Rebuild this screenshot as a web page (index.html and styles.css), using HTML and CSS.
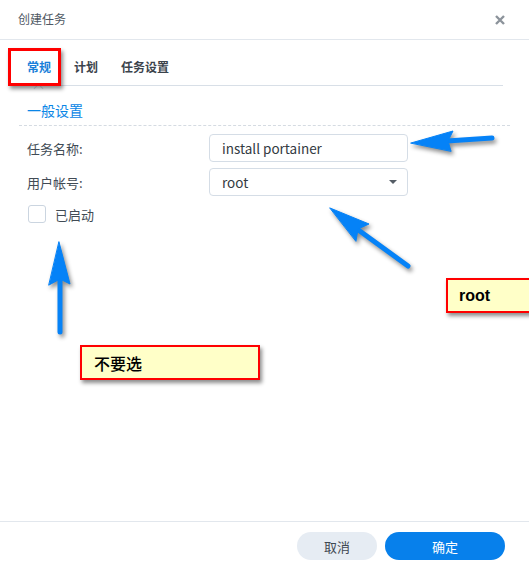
FILE: index.html
```html
<!DOCTYPE html>
<html lang="zh-CN">
<head>
<meta charset="utf-8">
<title>创建任务</title>
<link rel="stylesheet" href="styles.css">
</head>
<body>
<div class="dialog">
  <div class="header">
    <span class="title">创建任务</span>
    <svg class="close" width="10" height="10" viewBox="0 0 10 10"><path d="M1 1L9 9M9 1L1 9" stroke="#8c939b" stroke-width="2.4" stroke-linecap="butt"/></svg>
  </div>
  <div class="tabs">
    <span class="tab active">常规<i class="caret"></i></span>
    <span class="tab">计划</span>
    <span class="tab">任务设置</span>
  </div>
  <div class="content">
    <div class="section-title">一般设置</div>
    <div class="form">
      <div class="row">
        <label class="label">任务名称:</label>
        <div class="field">install portainer</div>
      </div>
      <div class="row">
        <label class="label">用户帐号:</label>
        <div class="field select">root<i class="drop"></i></div>
      </div>
      <div class="check-row">
        <span class="checkbox"></span>
        <span class="check-label">已启动</span>
      </div>
    </div>
  </div>
  <div class="footer">
    <button class="btn cancel">取消</button>
    <button class="btn ok">确定</button>
  </div>

  <div class="mark tab-mark"></div>
  <div class="note note-root">root</div>
  <div class="note note-cn">不要选</div>
  <svg class="arrows" width="529" height="569" viewBox="0 0 529 569">
    <g fill="#0582f7" stroke="#0582f7" stroke-linecap="round" stroke-linejoin="round">
      <line x1="447" y1="141" x2="492" y2="138" stroke-width="5"/>
      <polygon points="411,143 453,131 448,141 451,151" stroke-width="1"/>
      <line x1="357" y1="229" x2="408" y2="266" stroke-width="5"/>
      <polygon points="330,208 369,224 358,229 356,241" stroke-width="1"/>
      <line x1="60" y1="278" x2="60" y2="332" stroke-width="5"/>
      <polygon points="59,242 70,284 60,279 49,285" stroke-width="1"/>
    </g>
  </svg>
</div>
</body>
</html>
```
FILE: styles.css
```css
* { box-sizing: border-box; }
html, body { margin: 0; padding: 0; background: #fff; }
body {
  font-family: "Noto Sans CJK SC", "Noto Sans", sans-serif;
  color: #414b55;
}
.dialog {
  position: relative;
  width: 529px;
  height: 569px;
  display: flex;
  flex-direction: column;
  background: #fff;
}
.header {
  height: 40px;
  border-bottom: 1px solid #e2e7ed;
  display: flex;
  align-items: center;
  justify-content: space-between;
  padding: 0 24px 0 18px;
}
.title { font-size: 12px; color: #4f5863; line-height: 16px; margin-top: -1px; }
.close { display: block; margin-top: 0; }

.tabs {
  height: 46px;
  margin: 0 26px 0 19px;
  border-bottom: 1px solid #d8dfe7;
  display: flex;
  align-items: center;
  padding: 8px 0 0 8px;
  gap: 23px;
}
.tab {
  position: relative;
  font-size: 12px;
  font-weight: bold;
  color: #3b434c;
  line-height: 16px;
}
.tab.active { color: #1a7fd9; }
.caret {
  position: absolute;
  left: 8px;
  top: 26px;
  width: 7px;
  height: 7px;
  border-left: 1px solid #d8dfe7;
  border-top: 1px solid #d8dfe7;
  background: #fff;
  transform: rotate(45deg);
}

.content { padding: 0 19px; }
.section-title {
  font-size: 14px;
  color: #0a86e6;
  line-height: 20px;
  padding: 14px 0 5px 8px;
  border-bottom: 1px dashed #d5dbe2;
}
.form { padding: 8px 0 0 8px; }
.row {
  display: flex;
  align-items: center;
  height: 28px;
  margin-bottom: 6px;
}
.label {
  width: 182px;
  font-size: 13px;
  color: #414b55;
}
.field {
  position: relative;
  width: 199px;
  height: 28px;
  border: 1px solid #d5dde6;
  border-radius: 4px;
  font-size: 13.5px;
  line-height: 26px;
  padding-left: 12px;
  color: #333a42;
}
.drop {
  position: absolute;
  right: 10px;
  top: 11px;
  width: 0;
  height: 0;
  border-left: 4.5px solid transparent;
  border-right: 4.5px solid transparent;
  border-top: 4.5px solid #555d66;
}
.check-row {
  display: flex;
  align-items: center;
  margin-top: 9px;
  height: 18px;
}
.checkbox {
  width: 18px;
  height: 18px;
  border: 1px solid #cbd5e0;
  border-radius: 3px;
  margin-left: 1px;
}
.check-label {
  font-size: 13px;
  margin-left: 9px;
  color: #414b55;
}

.footer {
  margin-top: auto;
  border-top: 1px solid #e2e7ed;
  height: 48px;
  display: flex;
  justify-content: flex-end;
  align-items: flex-start;
  padding: 10px 24px 0 0;
  gap: 8px;
}
.btn {
  height: 28px;
  border: none;
  border-radius: 14px;
  font-family: "Noto Sans CJK SC", "Noto Sans", sans-serif;
  font-size: 13px;
  padding: 0;
}
.cancel { width: 80px; background: #e6ecf3; color: #3f4852; }
.ok { width: 120px; background: #0780eb; color: #fff; }

.mark {
  position: absolute;
  border: 3px solid #f00;
  box-shadow: 2px 3px 4px rgba(0,0,0,0.45);
}
.tab-mark { left: 8px; top: 48px; width: 53px; height: 38px; }

.note {
  position: absolute;
  background: #ffffc8;
  border: 2px solid #f00;
  box-shadow: 2px 3px 4px rgba(0,0,0,0.45);
  color: #000;
  display: flex;
  align-items: center;
}
.note-root {
  left: 446px;
  top: 278px;
  width: 100px;
  height: 35px;
  padding-left: 11px;
  font-family: "Liberation Sans", Arial, sans-serif;
  font-weight: bold;
  font-size: 16px;
}
.note-cn {
  left: 80px;
  top: 345px;
  width: 180px;
  height: 35px;
  padding-left: 12px;
  font-size: 16px;
  font-weight: 500;
}
.arrows {
  position: absolute;
  left: 0;
  top: 0;
  pointer-events: none;
  filter: drop-shadow(2px 3px 2px rgba(0,0,0,0.45));
}
```
